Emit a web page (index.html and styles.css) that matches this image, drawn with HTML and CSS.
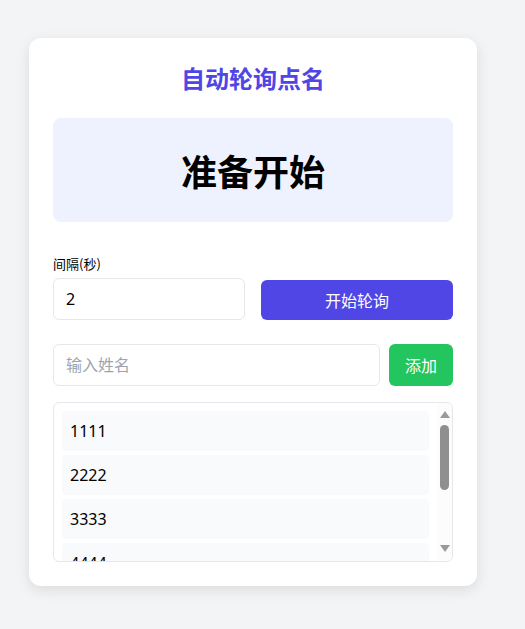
FILE: index.html
```html
<!DOCTYPE html>
<html lang="zh-CN">
<head>
<meta charset="utf-8">
<title>自动轮询点名</title>
<link rel="stylesheet" href="styles.css">
</head>
<body>
<div class="card">
  <h1 class="title">自动轮询点名</h1>
  <div class="display">准备开始</div>
  <div class="controls">
    <div class="field">
      <label class="label">间隔(秒)</label>
      <input class="input" type="number" value="2">
    </div>
    <button class="btn btn-primary">开始轮询</button>
  </div>
  <div class="add-row">
    <input class="input grow" type="text" placeholder="输入姓名">
    <button class="btn btn-green">添加</button>
  </div>
  <div class="list-box">
    <ul class="list">
      <li class="item">1111</li>
      <li class="item">2222</li>
      <li class="item">3333</li>
      <li class="item">4444</li>
      <li class="item">5555</li>
      <li class="item">6666</li>
      <li class="item">7777</li>
    </ul>
    <div class="scrollbar" aria-hidden="true">
      <div class="sb-btn sb-up"><span class="tri-up"></span></div>
      <div class="sb-track"><div class="sb-thumb"></div></div>
      <div class="sb-btn sb-down"><span class="tri-down"></span></div>
    </div>
  </div>
</div>
</body>
</html>
```
FILE: styles.css
```css
* { box-sizing: border-box; }
html, body { margin: 0; padding: 0; }
body {
  background: #f3f4f6;
  font-family: "Noto Sans", "Noto Sans CJK SC", sans-serif;
  color: #000;
  padding-top: 38px;
  height: 629px;
  overflow: hidden;
}
.card {
  width: 448px;
  margin-left: 29px;
  background: #fff;
  border-radius: 12px;
  padding: 24px;
  box-shadow: 0 4px 14px rgba(0,0,0,0.1);
}
.title {
  margin: 0 0 24px;
  text-align: center;
  font-size: 24px;
  line-height: 32px;
  font-weight: 700;
  color: #4f46e5;
  font-family: "Noto Sans CJK SC", sans-serif;
}
.display {
  background: #eef2ff;
  border-radius: 8px;
  height: 104px;
  display: flex;
  align-items: center;
  justify-content: center;
  font-size: 36px;
  font-weight: 700;
  font-family: "Noto Sans CJK SC", sans-serif;
  margin-bottom: 32px;
}
.controls {
  display: grid;
  grid-template-columns: 1fr 1fr;
  gap: 16px;
  align-items: end;
  margin-bottom: 24px;
}
.field { display: flex; flex-direction: column; gap: 4px; }
.label {
  font-size: 13px;
  line-height: 20px;
  font-family: "Noto Sans CJK SC", sans-serif;
}
.input {
  height: 42px;
  border: 1px solid #e5e7eb;
  border-radius: 6px;
  padding: 0 12px;
  font-size: 16px;
  font-family: "Noto Sans", "Noto Sans CJK SC", sans-serif;
  color: #000;
  background: #fff;
  outline: none;
  min-width: 0;
  width: 100%;
}
.input::placeholder { color: #9ca3af; }
.input::-webkit-inner-spin-button { display: none; }
.btn {
  border: none;
  border-radius: 6px;
  color: #fff;
  font-size: 16px;
  font-family: "Noto Sans CJK SC", sans-serif;
  height: 40px;
  cursor: pointer;
}
.btn-primary { background: #4f46e5; width: 100%; }
.add-row {
  display: flex;
  gap: 9px;
  margin-bottom: 16px;
}
.grow { flex: 1; }
.btn-green { background: #22c55e; width: 64px; height: 42px; flex: none; }
.list-box {
  display: flex;
  height: 160px;
  border: 1px solid #e5e7eb;
  border-radius: 6px;
  overflow: hidden;
}
.list {
  flex: 1;
  min-width: 0;
  list-style: none;
  margin: 0;
  padding: 8px;
  overflow: hidden;
  display: flex;
  flex-direction: column;
  gap: 4px;
}
.item {
  flex: none;
  background: #f9fafb;
  border-radius: 4px;
  height: 40px;
  line-height: 40px;
  padding: 0 8px;
  font-size: 16px;
}
.scrollbar {
  flex: none;
  width: 15px;
  background: #fcfcfc;
  display: flex;
  flex-direction: column;
}
.sb-btn {
  flex: none;
  height: 20px;
  display: flex;
  justify-content: center;
}
.sb-up { align-items: flex-start; padding-top: 8px; }
.sb-down { align-items: flex-start; padding-top: 4px; }
.tri-up {
  width: 0; height: 0;
  border-left: 5px solid transparent;
  border-right: 5px solid transparent;
  border-bottom: 7px solid #999;
}
.tri-down {
  width: 0; height: 0;
  border-left: 5px solid transparent;
  border-right: 5px solid transparent;
  border-top: 7px solid #999;
}
.sb-track {
  flex: 1;
  display: flex;
  justify-content: center;
  padding-top: 2px;
}
.sb-thumb {
  width: 9px;
  height: 65px;
  background: #8f8f8f;
  border-radius: 5px;
}
```
